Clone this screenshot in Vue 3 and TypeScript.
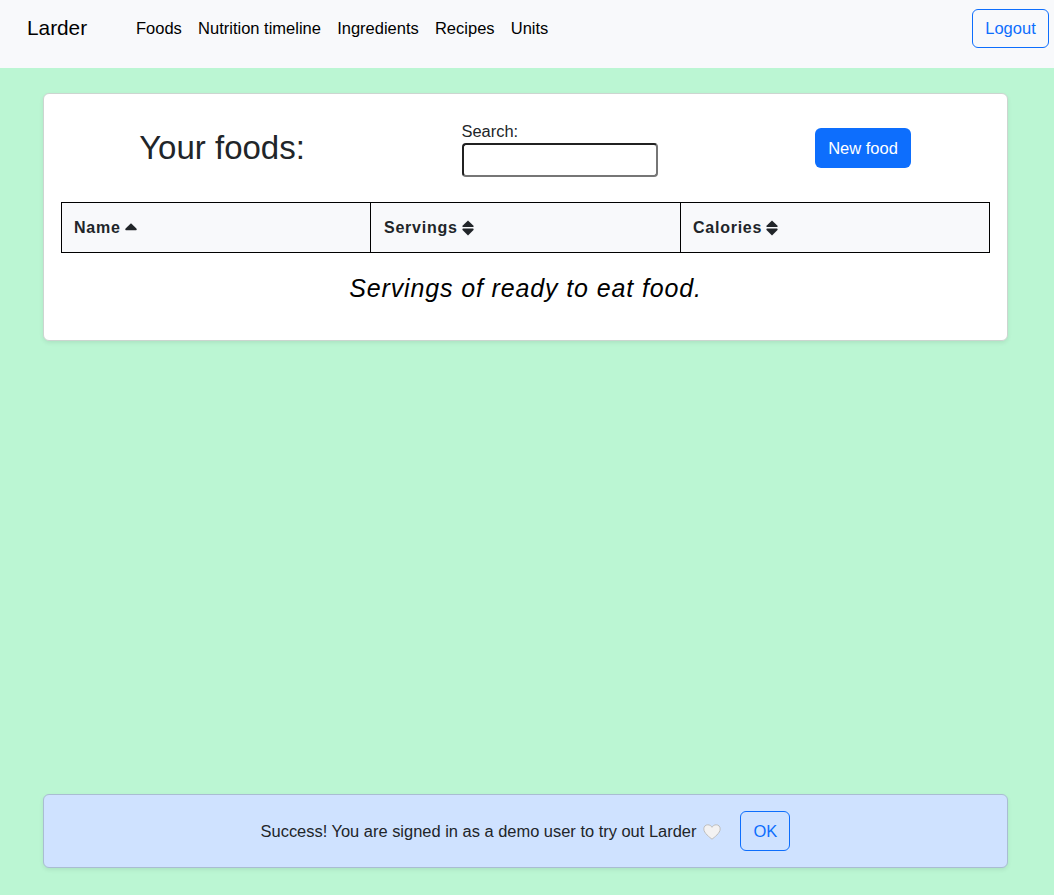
<script setup lang="ts">
import { ref } from 'vue'

interface Column {
  label: string
  sort: 'asc' | 'none'
}

const links: string[] = ['Foods', 'Nutrition timeline', 'Ingredients', 'Recipes', 'Units']
const columns: Column[] = [
  { label: 'Name', sort: 'asc' },
  { label: 'Servings', sort: 'none' },
  { label: 'Calories', sort: 'none' },
]
const search = ref('')
</script>

<template>
  <div class="page">
    <nav class="navbar">
      <a class="brand">Larder</a>
      <a v-for="link in links" :key="link" class="link">{{ link }}</a>
      <button class="btn outline logout">Logout</button>
    </nav>

    <main class="card">
      <div class="toolbar">
        <div class="cell"><h1>Your foods:</h1></div>
        <div class="cell">
          <label class="search">
            <span>Search:</span>
            <input v-model="search" type="text" />
          </label>
        </div>
        <div class="cell"><button class="btn primary">New food</button></div>
      </div>
      <div class="heads">
        <div v-for="col in columns" :key="col.label" class="head">
          <span>{{ col.label }}</span>
          <svg class="sort" width="12" height="16" viewBox="0 0 12 16">
            <path v-if="col.sort === 'asc'" d="M6 3.2 L11.4 8.6 Q12.2 10.2 11 10.2 H1 Q-.2 10.2 .6 8.6 Z" />
            <template v-else>
              <path d="M6 .4 L11.5 5.7 Q12 7 11 7 H1 Q0 7 .5 5.7 Z" />
              <path d="M6 15.6 L11.5 10 Q12 8.4 11 8.4 H1 Q0 8.4 .5 10 Z" />
            </template>
          </svg>
        </div>
      </div>
      <p class="empty">Servings of ready to eat food.</p>
    </main>

    <div class="notice">
      <span class="message">Success! You are signed in as a demo user to try out Larder</span>
      <svg class="heart" width="18" height="16" viewBox="0 0 18 16">
        <path d="M9 15.2 C6.8 13.4 .8 9.2 .8 4.9 C.8 2.4 2.6 .8 4.8 .8 C6.7 .8 8.2 1.8 9 3.3 C9.8 1.8 11.3 .8 13.2 .8 C15.4 .8 17.2 2.4 17.2 4.9 C17.2 9.2 11.2 13.4 9 15.2 Z" />
      </svg>
      <button class="btn outline ok">OK</button>
    </div>
  </div>
</template>

<style>
body {
  margin: 0;
}
</style>

<style scoped>
.page {
  box-sizing: border-box;
  height: 895px;
  padding-bottom: 27px;
  display: flex;
  flex-direction: column;
  background: #bbf6d3;
  color: #212529;
  font-family: "Liberation Sans", Arial, sans-serif;
  font-size: 16.45px;
  line-height: 24px;
}
.navbar {
  box-sizing: border-box;
  height: 68px;
  padding: 9px 5px 0 27px;
  display: flex;
  align-items: flex-start;
  background: #f8f9fb;
  color: #000;
}
.brand {
  width: 109px;
  font-size: 20.8px;
  line-height: 38px;
}
.link {
  margin-right: 16.2px;
  line-height: 39px;
  font-size: 16.5px;
}
.btn {
  box-sizing: border-box;
  border-radius: 6px;
  padding: 0;
  font-family: inherit;
  font-size: 16.5px;
  line-height: 24px;
  text-align: center;
}
.outline {
  border: 1px solid #0d6efd;
  background: transparent;
  color: #0d6efd;
}
.primary {
  width: 96px;
  height: 40px;
  border: 0;
  background: #0d6efd;
  color: #fff;
}
.logout {
  width: 77px;
  height: 39px;
  margin-left: auto;
  padding-bottom: 1px;
}
.card {
  box-sizing: border-box;
  height: 248px;
  margin: 25px 46px 0 43px;
  padding: 17px;
  border: 1px solid #ccd5d0;
  border-radius: 6px;
  background: #fff;
  box-shadow: 0 2px 4px rgba(0, 0, 0, 0.075);
}
.toolbar {
  box-sizing: border-box;
  height: 91px;
  padding-bottom: 18px;
  display: grid;
  grid-template-columns: 322px 353px 254px;
}
.cell {
  display: flex;
  align-items: center;
  justify-content: center;
}
h1 {
  margin: 0;
  font-size: 33px;
  font-weight: 400;
  line-height: 40px;
}
.search {
  display: flex;
  flex-direction: column;
}
.search input {
  box-sizing: border-box;
  width: 196px;
  height: 34px;
  border: 2px solid;
  border-color: #212121 #767676 #767676 #212121;
  border-radius: 4px;
  background: #fff;
}
.heads {
  box-sizing: border-box;
  height: 51px;
  display: grid;
  grid-template-columns: 308px 310px 1fr;
  border: 1px solid #000;
  background: #f8f9fb;
}
.head {
  display: flex;
  align-items: center;
  gap: 4px;
  padding-left: 12px;
  font-size: 16px;
  font-weight: 700;
  letter-spacing: 0.75px;
}
.head + .head {
  border-left: 1px solid #000;
}
.head:nth-child(2) {
  padding-left: 13px;
}
.sort {
  fill: #212529;
}
.empty {
  margin: 16px 0 0;
  color: #000;
  text-align: center;
  font-size: 25px;
  font-style: italic;
  line-height: 39px;
  letter-spacing: 0.87px;
}
.notice {
  box-sizing: border-box;
  height: 74px;
  margin: auto 46px 0 43px;
  display: flex;
  align-items: center;
  justify-content: center;
  border: 1px solid #a9bdd2;
  border-radius: 6px;
  background: #cfe2ff;
  box-shadow: 0 2px 4px rgba(0, 0, 0, 0.075);
}
.heart {
  margin: 1px 19px 0 7px;
  fill: #f3f2f2;
  stroke: #bdbdbd;
  stroke-width: 1;
}
.ok {
  width: 50px;
  height: 40px;
}
</style>
